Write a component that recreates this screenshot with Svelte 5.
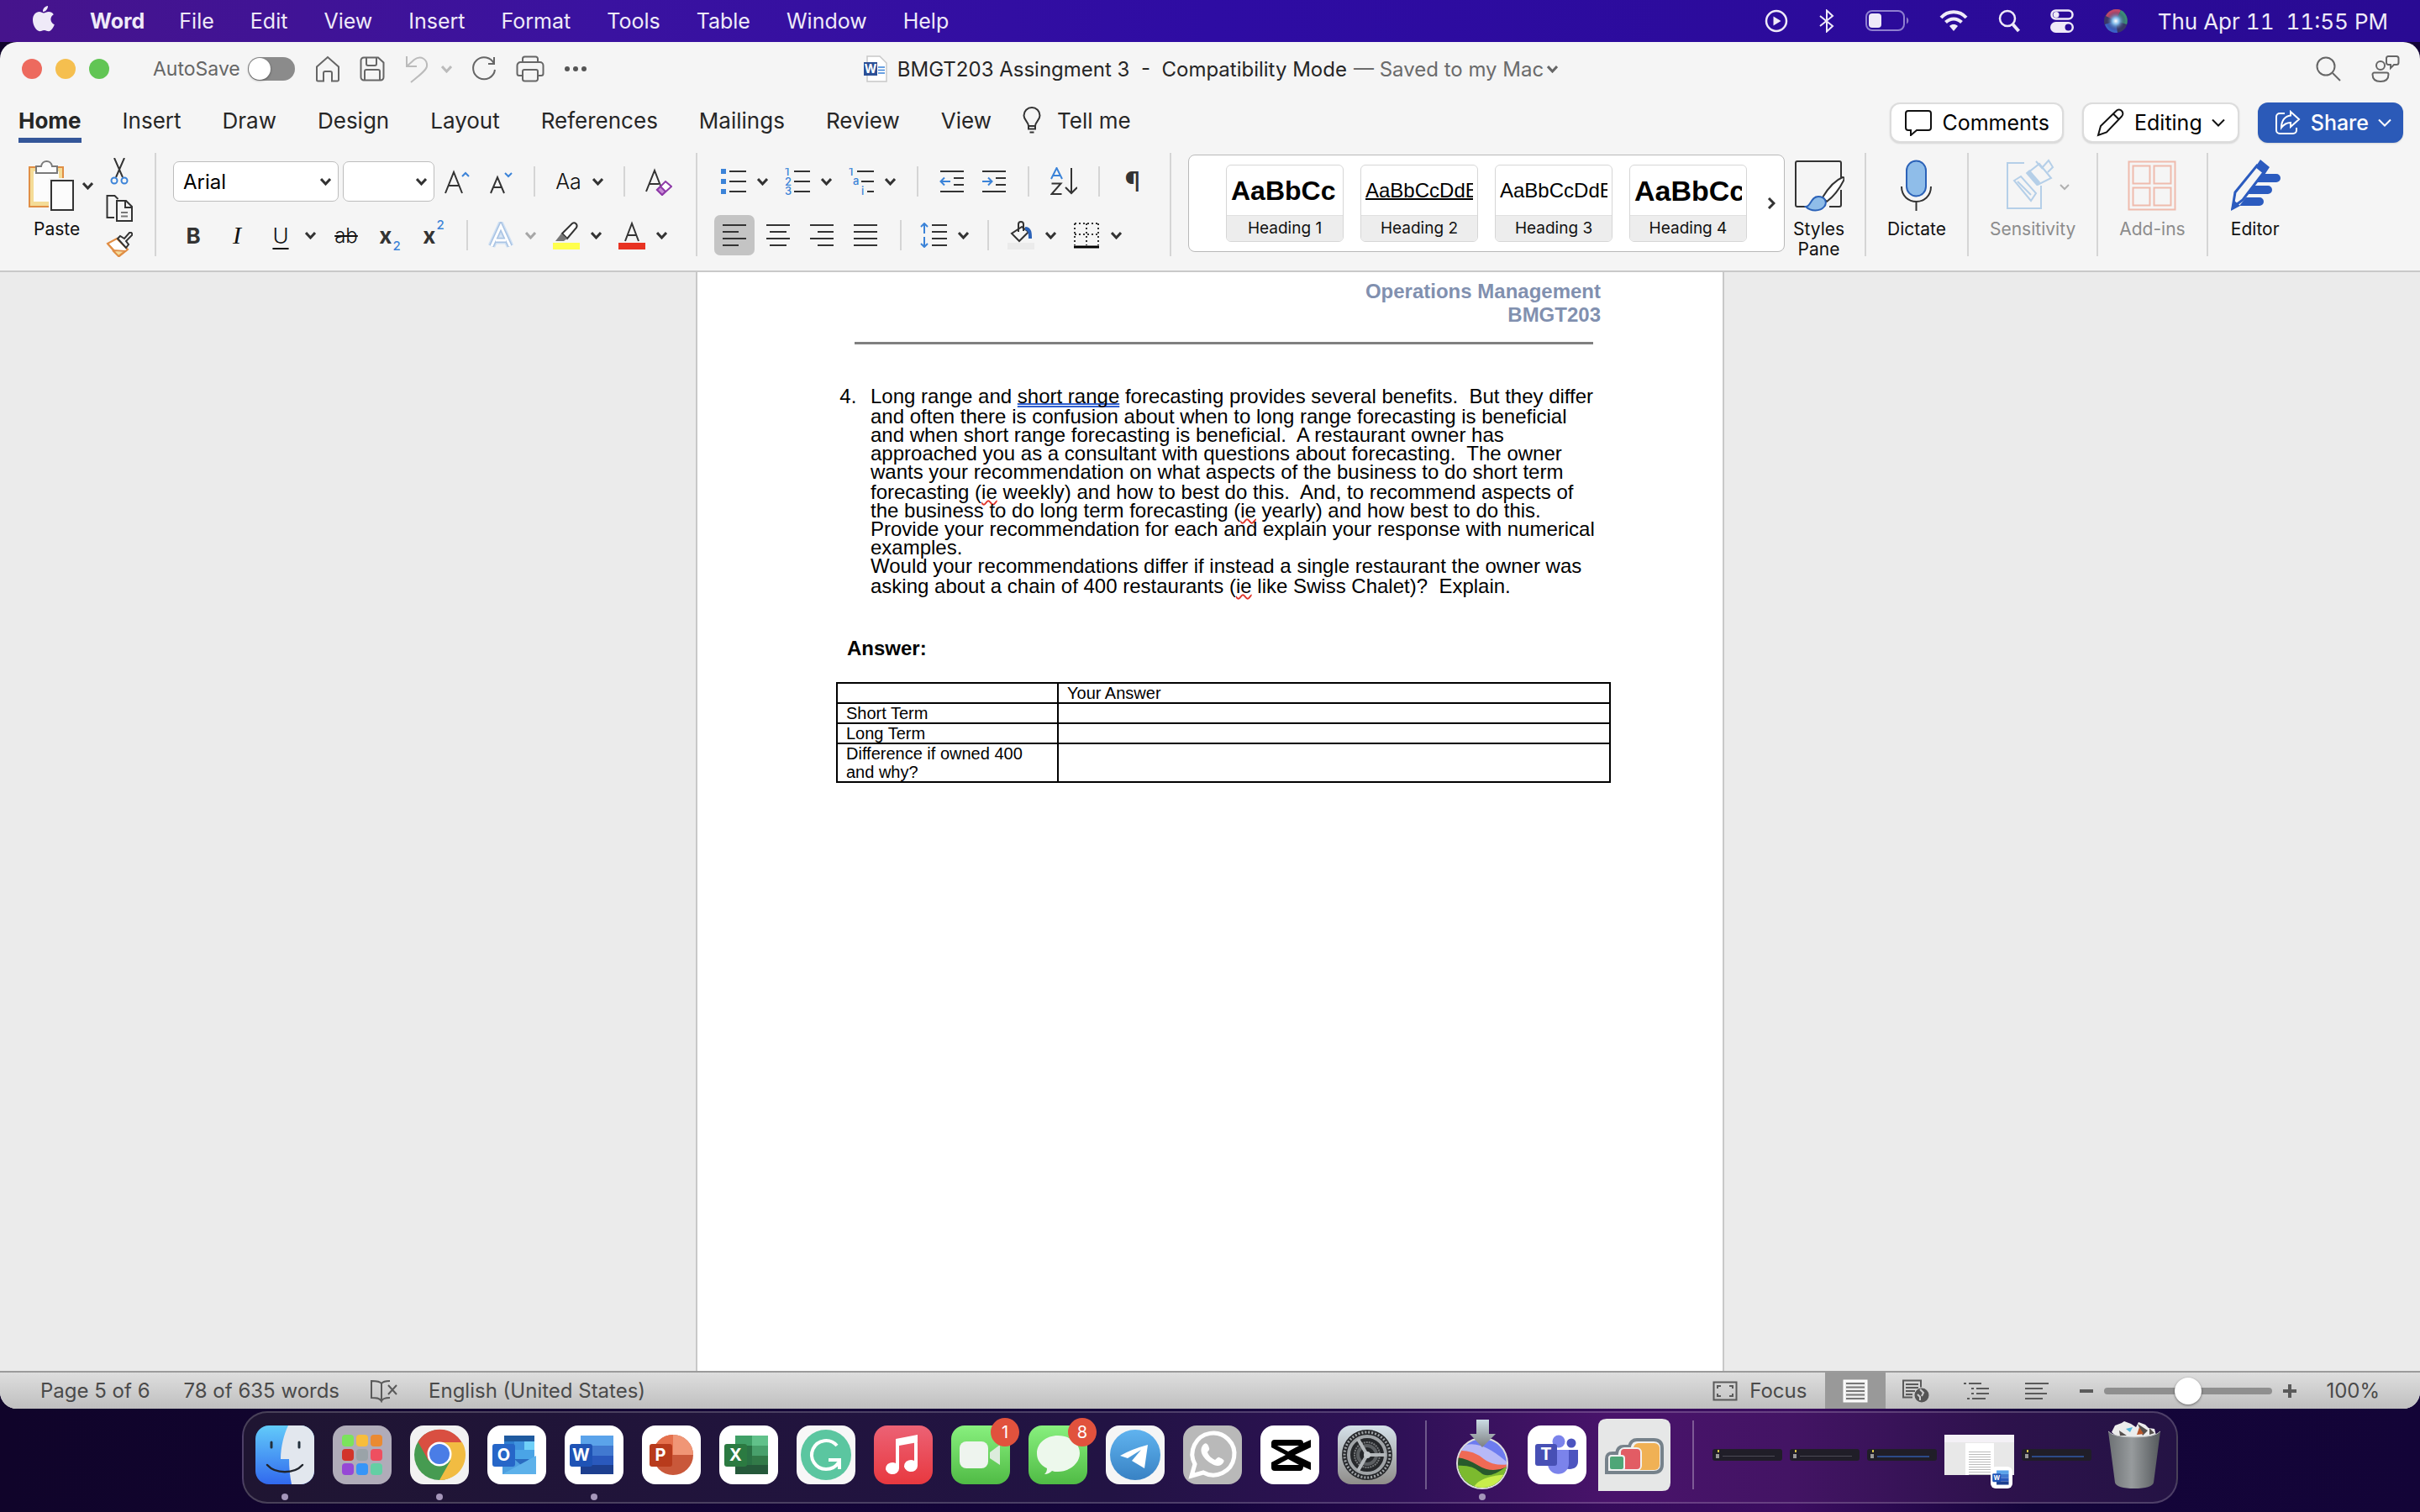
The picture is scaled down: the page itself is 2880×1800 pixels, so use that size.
<script>
    const menus = ["File", "Edit", "View", "Insert", "Format", "Tools", "Table", "Window", "Help"];
    const tabs = ["Insert", "Draw", "Design", "Layout", "References", "Mailings", "Review", "View"];

    const headings = [
        { label: "Heading 1", sample: "AaBbCc", type: "h1" },
        { label: "Heading 2", sample: "AaBbCcDdEe", type: "h2" },
        { label: "Heading 3", sample: "AaBbCcDdEe", type: "h3" },
        { label: "Heading 4", sample: "AaBbCc", type: "h4" },
    ];

    const alignments = [
        { name: "Align left", d: "M1 2h28M1 10h19M1 18h28M1 26h19" },
        { name: "Center", d: "M1 2h28M5 10h20M1 18h28M5 26h20" },
        { name: "Align right", d: "M1 2h28M10 10h19M1 18h28M10 26h19" },
        { name: "Justify", d: "M1 2h28M1 10h28M1 18h28M1 26h28" },
    ];
    let alignment = $state("Align left");
    let zoom = $state(50);

    const launchpad = [
        "#7be35c", "#f7bd3c", "#ea8a32",
        "#d2342a", "#9aa3a8", "#ee4f60",
        "#9647d6", "#3795f7", "#64cfa4",
    ];
</script>

{#snippet chevron()}
    <svg class="chev" width="13" height="10" viewBox="0 0 13 10"><path d="M1 2l5.5 6L12 2" /></svg>
{/snippet}

{#snippet wordLogo(size)}
    <svg width={size} height={size} viewBox="0 0 70 70">
        <rect width="70" height="70" rx="16" fill="#fff" />
        <path d="M19 12h39v12H19z" fill="#5ba3ea" />
        <path d="M19 24h39v12H19z" fill="#4179d0" />
        <path d="M19 36h39v11H19z" fill="#2a59bd" />
        <path d="M19 47h39v11H19z" fill="#1d3f8f" />
        <rect x="6" y="22" width="27" height="27" rx="3" fill="#1f53b5" />
        <text x="19.500" y="42" class="logo-letter">W</text>
    </svg>
{/snippet}

<div class="screen">
    <nav class="menubar">
        <svg class="apple" width="28" height="34" viewBox="0 0 28 34">
            <path
                d="M19 1c.3 3.600-3 7.200-6 7 -.4-3.400 2.600-6.600 6-7zM14 9.600c1.600 0 3.300-1.600 6-1.600 2.300 0 4.500 1.200 5.800 3.200-5 3-4.200 9.800 1 12-1.200 3.400-3.900 8-6.800 8-2.200 0-2.900-1.300-5.400-1.300s-3.300 1.300-5.400 1.300C5.600 31.200 1 24.500 1 17.800 1 11.600 4.800 8.100 8.700 8.100c2.400 0 3.800 1.500 5.300 1.500z"
            />
        </svg>
        <button class="app-name">Word</button>
        {#each menus as menu}
            <button>{menu}</button>
        {/each}
        <div class="tray">
            <svg width="28" height="28" viewBox="0 0 28 28">
                <circle cx="14" cy="14" r="12" class="stroke" />
                <path d="M10.500 8.500l9 5.500-9 5.500z" />
            </svg>
            <svg width="20" height="28" viewBox="0 0 20 28">
                <path d="M2 8l15 12-7 6.500v-25L17 8 2 20" class="stroke thin" />
            </svg>
            <svg width="52" height="26" viewBox="0 0 52 26">
                <rect x="1" y="1" width="45" height="23" rx="7" class="stroke dim" />
                <rect x="4" y="4" width="15" height="17" rx="4" />
                <path d="M49 8.500c3 1.500 3 6.500 0 8z" opacity=".5" />
            </svg>
            <svg width="34" height="26" viewBox="0 0 34 26">
                <path d="M2 9c8-9 22-9 30 0M7.500 14.500c5.500-5.500 13.500-5.500 19 0" class="stroke wide" />
                <path d="M17 25l-5-6c3-2.600 7-2.600 10 0z" />
            </svg>
            <svg width="26" height="28" viewBox="0 0 26 28">
                <circle cx="11" cy="11" r="9" class="stroke" />
                <path d="M17.500 18l7 8" class="stroke wide" />
            </svg>
            <svg width="28" height="28" viewBox="0 0 28 28">
                <rect x="1.500" y="1.500" width="25" height="10" rx="5" class="stroke" />
                <circle cx="7" cy="6.500" r="3.500" />
                <path d="M6.500 15h15a6.500 6.500 0 010 13h-15a6.500 6.500 0 010-13zm15 2.500a4 4 0 100 8 4 4 0 000-8z" fill-rule="evenodd" />
            </svg>
            <svg width="28" height="28" viewBox="0 0 28 28">
                <defs>
                    <radialGradient id="siri">
                        <stop offset="0" stop-color="#fff" />
                        <stop offset=".35" stop-color="#7fb8e8" />
                        <stop offset="1" stop-color="#2b2450" stop-opacity="0" />
                    </radialGradient>
                </defs>
                <circle cx="14" cy="14" r="14" fill="#3a3768" />
                <path d="M2 8a14 14 0 0118-7L14 14z" fill="#c0486a" />
                <path d="M20 1a14 14 0 017 17L14 14z" fill="#3c8a78" />
                <path d="M1 18a14 14 0 0015 10l-2-14z" fill="#3b62c9" />
                <circle cx="14" cy="14" r="12" fill="url(#siri)" />
            </svg>
            <time>Thu Apr 11  11:55 PM</time>
        </div>
    </nav>

    <main class="window">
        <header class="titlebar">
            <div class="quick">
                <div class="lights">
                    <button class="close" aria-label="Close"></button>
                    <button class="minimize" aria-label="Minimize"></button>
                    <button class="full" aria-label="Full screen"></button>
                </div>
                <label class="autosave">AutoSave <input type="checkbox" role="switch" /></label>
                <div class="quick-icons">
                    <button aria-label="Home">
                        <svg width="30" height="32" viewBox="0 0 30 32"><path d="M2 13.500L15 2l13 11.500V29a1.500 1.500 0 01-1.500 1.500H20V21a2 2 0 00-2-2h-6a2 2 0 00-2 2v9.500H3.500A1.500 1.500 0 012 29z" /></svg>
                    </button>
                    <button aria-label="Save">
                        <svg width="30" height="30" viewBox="0 0 30 30"><path d="M5 1.500h17l6.500 6V25a3.500 3.500 0 01-3.500 3.500H5A3.500 3.500 0 011.500 25V5A3.500 3.500 0 015 1.500zM8 2v7a2 2 0 002 2h8a2 2 0 002-2V2M6 28V18a2 2 0 012-2h14a2 2 0 012 2v10" /></svg>
                    </button>
                    <button class="faded" aria-label="Undo">
                        <svg width="30" height="34" viewBox="0 0 30 34"><path d="M3 2v12h12M3 14l9-8c8-6 16 0 15 8-1 5-8 10-19 19" /></svg>
                        {@render chevron()}
                    </button>
                    <button aria-label="Repeat">
                        <svg width="30" height="32" viewBox="0 0 30 32"><path d="M20 10h7V2M27 10a13 13 0 101 7" /></svg>
                    </button>
                    <button aria-label="Print">
                        <svg width="34" height="32" viewBox="0 0 34 32"><path d="M8 8V4a2.500 2.500 0 012.500-2.500h13A2.500 2.500 0 0126 4v4M8 24H4a2.500 2.500 0 01-2.500-2.500V12A4 4 0 015.500 8h23a4 4 0 014 4v9.500A2.500 2.500 0 0130 24h-4M10 17h14a2 2 0 012 2v9a2.500 2.500 0 01-2.500 2.500h-13A2.500 2.500 0 018 28v-9a2 2 0 012-2z" /></svg>
                    </button>
                    <button aria-label="More">
                        <svg class="dots" width="28" height="8" viewBox="0 0 28 8"><circle cx="4" cy="4" r="3" /><circle cx="14" cy="4" r="3" /><circle cx="24" cy="4" r="3" /></svg>
                    </button>
                </div>
            </div>

            <h1>
                <svg width="28" height="32" viewBox="0 0 28 32">
                    <path d="M4 1h15l8 8v22H4z" fill="#fff" stroke="#c8c8c8" stroke-width="1.500" />
                    <path d="M17 14h8M17 17.500h8M17 21h8" stroke="#3b83d8" stroke-width="1.500" />
                    <rect x="0" y="8" width="16" height="16" class="doc-badge" />
                    <text x="8" y="21" class="mini-letter">W</text>
                </svg>
                <span>BMGT203 Assingment 3  -  Compatibility Mode</span>
                <button>— Saved to my Mac {@render chevron()}</button>
            </h1>

            <div class="title-right">
                <button aria-label="Search">
                    <svg width="30" height="30" viewBox="0 0 30 30"><circle cx="12" cy="12" r="10.500" /><path d="M20 20l9 9" /></svg>
                </button>
                <button aria-label="Account">
                    <svg width="34" height="34" viewBox="0 0 34 34"><circle cx="11" cy="13" r="5" /><path d="M1.500 23.500A2 2 0 013.500 21.500h15a2 2 0 012 2C20.500 29 17 32 11 32s-9.500-3-9.500-8.500zM20 2h10a2.500 2.500 0 012.500 2.500v5A2.500 2.500 0 0130 12h-3l-4 4v-4h-3a2.500 2.500 0 01-2-2.500v-5A2.500 2.500 0 0120 2z" /></svg>
                </button>
            </div>
        </header>

        <div class="tabs">
            <button class="active">Home</button>
            {#each tabs as tab}
                <button>{tab}</button>
            {/each}
            <button class="tell-me">
                <svg width="22" height="32" viewBox="0 0 22 32"><path d="M7 23c0-5-5.500-7-5.500-12.500a9.500 9.500 0 0119 0C20.500 16 15 18 15 23zM7 23v3.500h8V23M8.500 30.500h5" /></svg>
                Tell me
            </button>
            <div class="tab-actions">
                <button class="pill">
                    <svg width="34" height="32" viewBox="0 0 34 32"><path d="M5 2h24a3 3 0 013 3v17a3 3 0 01-3 3H15l-7 6v-6H5a3 3 0 01-3-3V5a3 3 0 013-3z" /></svg>
                    Comments
                </button>
                <button class="pill">
                    <svg width="34" height="34" viewBox="0 0 34 34"><path d="M2 32l3-11L23.500 3a4.500 4.500 0 016.500 0 4.500 4.500 0 010 6.500L12 28.500zM20 6.500l7 7" /></svg>
                    Editing
                    <svg width="16" height="12" viewBox="0 0 16 12"><path d="M1 2.500l7 7 7-7" /></svg>
                </button>
                <button class="pill share">
                    <svg width="32" height="30" viewBox="0 0 32 30"><path d="M12 4H6a4 4 0 00-4 4v16a4 4 0 004 4h16a4 4 0 004-4v-3M19 2l10 9-10 9v-5c-5 0-8 2-11 6 0-8 4-14 11-14.500z" /></svg>
                    Share
                    <svg width="16" height="12" viewBox="0 0 16 12"><path d="M1 2.500l7 7 7-7" /></svg>
                </button>
            </div>
        </div>

        <section class="ribbon">
            <div class="clipboard">
                <button class="paste">
                    <span class="art">
                        <svg width="54" height="62" viewBox="0 0 54 62">
                            <path d="M1 9h40v47H1z" fill="#f4dc97" stroke="#e08e45" />
                            <path d="M6 14h30v36H6z" fill="#fcfcfc" stroke="none" />
                            <path d="M9 16V8h6c1-8 12-8 13 0h6v8z" fill="#fcfcfc" stroke="#7a7a7a" />
                            <path d="M24 22h32v40H24z" fill="#f5f5f5" stroke="none" />
                            <path d="M27 25h26v35H27z" fill="#fcfcfc" />
                        </svg>
                        {@render chevron()}
                    </span>
                    Paste
                </button>
                <div class="clip-tools">
                    <button aria-label="Cut">
                        <svg width="32" height="32" viewBox="0 0 32 32"><path d="M10 0l10 23M22 0L12 23" /><g class="blue"><circle cx="10" cy="27" r="3.500" /><circle cx="22" cy="27" r="3.500" /></g></svg>
                    </button>
                    <button aria-label="Copy">
                        <svg width="32" height="32" viewBox="0 0 32 32"><path d="M10 27H1.500V1h9l4 4M13 7h11l7 7v17H13zM23 7v8h8" /><path d="M18 21h8M18 25.500h8" stroke="#777" /></svg>
                    </button>
                    <button aria-label="Format painter">
                        <svg width="32" height="30" viewBox="0 0 32 30"><path d="M2 14l11-6 13 13-10 8z" fill="#fff" stroke="#e08e45" /><path d="M9 23l12 1-6 5z" fill="#f4dc97" stroke="none" /><path d="M2 14l7 8 14 1-8 6-7-7" stroke="#e08e45" /><path d="M14 8l3-3 5 3 6-7c2-1 4 1 3 3l-7 7 3 4-3 4z" fill="#f5f5f5" /></svg>
                    </button>
                </div>
            </div>

            <div class="group font">
                <div class="row wide-gap">
                    <div class="pickers">
                        <label class="picker font-name">
                            <select aria-label="Font"><option>Arial</option></select>
                            {@render chevron()}
                        </label>
                        <label class="picker font-size">
                            <select aria-label="Font size"><option></option></select>
                            {@render chevron()}
                        </label>
                    </div>
                    <button aria-label="Increase font size">
                        <svg width="30" height="32" viewBox="0 0 30 32"><path d="M1 30L11 5l10 25M5 21h12" /><path d="M21 10l4-4 4 4" class="blue" /></svg>
                    </button>
                    <button aria-label="Decrease font size">
                        <svg width="28" height="32" viewBox="0 0 28 32"><path d="M1 30l8-19 8 19M4 23h10" /><path d="M18 6l4 4 4-4" class="blue" /></svg>
                    </button>
                    <span class="sep"></span>
                    <button aria-label="Change case"><span class="case">Aa</span>{@render chevron()}</button>
                    <span class="sep"></span>
                    <button aria-label="Clear formatting">
                        <svg width="32" height="34" viewBox="0 0 32 34"><path d="M1 29L11 4l7 18M4 20h12" /><path d="M24 17l7 6-11 10-6-6z" fill="#fff" stroke="#8e3aa8" /><path d="M18 23l6 6-4 4-6-6z" fill="#c88bd6" stroke="#8e3aa8" /></svg>
                    </button>
                </div>
                <div class="row styles-row">
                    <button class="glyph bold">B</button>
                    <button class="glyph italic">I</button>
                    <button><span class="glyph under">U</span>{@render chevron()}</button>
                    <button class="glyph strike">ab</button>
                    <button class="glyph bold x-letter">x<sub>2</sub></button>
                    <button class="glyph bold x-letter">x<sup>2</sup></button>
                    <span class="sep"></span>
                    <button class="effects" aria-label="Text effects">
                        <svg width="32" height="32" viewBox="0 0 32 32"><path d="M5 29L16 5l11 24M10 22h12" stroke="#cfe0f3" stroke-width="9" /><path d="M5 29L16 5l11 24M10 22h12" stroke="#a9c3e3" stroke-width="6" /><path d="M5 29L16 5l11 24M10 22h12" stroke="#fff" stroke-width="3" /></svg>
                        {@render chevron()}
                    </button>
                    <button aria-label="Highlight">
                        <svg width="32" height="34" viewBox="0 0 32 34"><path d="M11 15L23 3c3-2 7 1 5 5L17 21z" fill="#fff" /><path d="M10 15l7 6-4 3H3z" fill="#777" stroke="none" /><path d="M0 26h32v8H0z" fill="#ffff4d" stroke="none" /></svg>
                        {@render chevron()}
                    </button>
                    <button aria-label="Font color">
                        <svg width="32" height="34" viewBox="0 0 32 34"><path d="M8 24l8-21 8 21M11 17h10" /><path d="M0 26h32v8H0z" fill="#e83323" stroke="none" /></svg>
                        {@render chevron()}
                    </button>
                </div>
            </div>

            <div class="group paragraph">
                <div class="row">
                    <button aria-label="Bullets">
                        <svg width="30" height="30" viewBox="0 0 30 30"><path d="M10 3h20M10 15h20M10 27h20" /><path d="M0 0h6v6H0zM0 12h6v6H0zM0 24h6v6H0z" fill="#3b83d8" stroke="none" /></svg>
                        {@render chevron()}
                    </button>
                    <button aria-label="Numbering">
                        <svg width="30" height="32" viewBox="0 0 30 32"><path d="M11 4h19M11 16h19M11 28h19" /><text x="0" y="9" class="num">1</text><text x="0" y="21" class="num">2</text><text x="0" y="32" class="num">3</text></svg>
                        {@render chevron()}
                    </button>
                    <button aria-label="Multilevel list">
                        <svg width="30" height="32" viewBox="0 0 30 32"><path d="M10 4h20M15 16h15M22 28h8" /><text x="0" y="9" class="num">1</text><text x="5" y="20" class="num">a</text><text x="15" y="32" class="num">i</text></svg>
                        {@render chevron()}
                    </button>
                    <span class="sep"></span>
                    <button aria-label="Decrease indent">
                        <svg width="30" height="30" viewBox="0 0 30 30"><path d="M1 3h28M17 11h12M17 19h12M1 27h28" /><path d="M13 15H2M6 10.500L1.500 15 6 19.500" class="blue" /></svg>
                    </button>
                    <button aria-label="Increase indent">
                        <svg width="30" height="30" viewBox="0 0 30 30"><path d="M1 3h28M17 11h12M17 19h12M1 27h28" /><path d="M1 15h11M8 10.500l4.500 4.500L8 19.500" class="blue" /></svg>
                    </button>
                    <span class="sep"></span>
                    <button aria-label="Sort">
                        <svg width="32" height="34" viewBox="0 0 32 34"><path d="M25 1v30M18 24l7 7 7-7" /><path d="M1 14L7.500 1 14 14M3.500 10h8" class="blue" /><path d="M1.500 19.500h11l-11 12.500h12" /></svg>
                    </button>
                    <span class="sep"></span>
                    <button class="pilcrow">¶</button>
                </div>
                <div class="row align-row">
                    <div class="aligns">
                        {#each alignments as item}
                            <button class:selected={alignment === item.name} aria-label={item.name} onclick={() => (alignment = item.name)}>
                                <svg width="30" height="28" viewBox="0 0 30 28"><path d={item.d} /></svg>
                            </button>
                        {/each}
                    </div>
                    <span class="sep"></span>
                    <button aria-label="Line spacing">
                        <svg width="32" height="30" viewBox="0 0 32 30"><path d="M14 3h18M14 11h18M14 19h18M14 27h18" /><path d="M5 1v12M1 5l4-4 4 4M5 17v12M1 25l4 4 4-4" class="blue" /></svg>
                        {@render chevron()}
                    </button>
                    <span class="sep"></span>
                    <button aria-label="Shading">
                        <svg width="32" height="34" viewBox="0 0 32 34"><path d="M17 7L5 15l9 9 11-11zM13 13V4c0-4 6-4 6 0v8" /><path d="M21 9c6 0 6 6 6 12" stroke="#2b62b8" stroke-width="4" /><path d="M0 26h32v8H0z" fill="#ebebeb" stroke="none" /></svg>
                        {@render chevron()}
                    </button>
                    <button aria-label="Borders">
                        <svg width="32" height="32" viewBox="0 0 32 32"><path d="M2 2h28M2 2v26M30 2v26M16 2v26M2 15h28" stroke-dasharray="2 3" /><path d="M1 30h30" stroke="#000" stroke-width="3" /></svg>
                        {@render chevron()}
                    </button>
                </div>
            </div>

            <div class="gallery-group">
                <div class="gallery">
                    {#each headings as heading}
                        <button class="card">
                            <span class="sample {heading.type}">{heading.sample}</span>
                            <span class="card-label">{heading.label}</span>
                        </button>
                    {/each}
                    <button class="more" aria-label="More styles">
                        <svg width="10" height="14" viewBox="0 0 10 14"><path d="M2 1l6 6-6 6" /></svg>
                    </button>
                </div>
                <button class="large pane">
                    <svg width="60" height="62" viewBox="0 0 60 62">
                        <path d="M14 56H4a2 2 0 01-2-2V4a2 2 0 012-2h50a2 2 0 012 2v18M56 36v18a2 2 0 01-2 2H42" />
                        <path d="M34 45c6-10 14-20 24-24 2 0 2 2 1 4-5 10-12 19-20 25z" fill="#fff" />
                        <path d="M14 56c6 0 6-12 15-12 8 0 11 7 7 12-5 6-16 6-22 0z" class="fill-blue" />
                    </svg>
                    <span>Styles<br />Pane</span>
                </button>
            </div>

            <button class="large">
                <svg width="40" height="62" viewBox="0 0 40 62">
                    <rect x="8" y="1.500" width="23" height="42" rx="11.500" class="fill-blue" />
                    <path d="M2 32c0 24 35 24 35 0M19.500 50v11" />
                </svg>
                <span>Dictate</span>
            </button>
            <button class="large disabled">
                <svg width="88" height="64" viewBox="0 0 88 64">
                    <g stroke="#b5cfe8">
                        <path d="M34 5H14v54h40V32" />
                        <path d="M22 26l8-5 18 20-6 9zM26 27l16 16" />
                        <path d="M38 17l12 14 16-8-14-17zM48 3l8 9M55 11l8-9 5 8-6 6" />
                        <path d="M38 15l13 15" stroke-width="6" />
                    </g>
                    <path d="M77 31l5 5 5-5" stroke="#b0b0b0" />
                </svg>
                <span>Sensitivity</span>
            </button>
            <button class="large disabled">
                <svg width="58" height="60" viewBox="0 0 58 60">
                    <path d="M1.500 1.500h55v57h-55zM6.500 6.500h20v21h-20zM31.500 6.500h20v21h-20zM6.500 32.500h20v21h-20zM31.500 32.500h20v21h-20z" stroke="#efbbad" />
                </svg>
                <span>Add-ins</span>
            </button>
            <button class="large">
                <svg width="62" height="64" viewBox="0 0 62 64">
                    <path d="M34 18h22a5 5 0 010 10H28zM28 32h18a5 5 0 010 10H22zM20 46h16a5 5 0 010 10H12z" fill="#2b5bbf" stroke="none" />
                    <path d="M4 58l3-18L33 8l9 7-26 34z" fill="#f5f5f5" stroke="#2b5bbf" stroke-width="3" />
                    <path d="M31 10l6-9 11 9-6 9zM2 62l3-13 8 7z" fill="#2b5bbf" stroke="none" />
                </svg>
                <span>Editor</span>
            </button>
        </section>

        <section class="workspace">
            <article class="page">
                <header class="page-header">
                    <p>Operations Management</p>
                    <p>BMGT203</p>
                </header>
                <ol start="4">
                    <li>
                        <span class="line gap">Long range and <span class="grammar">short range</span> forecasting provides several benefits.  But they differ</span>
                        <span class="line">and often there is confusion about when to long range forecasting is beneficial</span>
                        <span class="line">and when short range forecasting is beneficial.  A restaurant owner has</span>
                        <span class="line">approached you as a consultant with questions about forecasting.  The owner</span>
                        <span class="line gap">wants your recommendation on what aspects of the business to do short term</span>
                        <span class="line">forecasting (<span class="typo">ie</span> weekly) and how to best do this.  And, to recommend aspects of</span>
                        <span class="line">the business to do long term forecasting (<span class="typo">ie</span> yearly) and how best to do this.</span>
                        <span class="line">Provide your recommendation for each and explain your response with numerical</span>
                        <span class="line">examples.</span>
                        <span class="line gap">Would your recommendations differ if instead a single restaurant the owner was</span>
                        <span class="line">asking about a chain of 400 restaurants (<span class="typo">ie</span> like Swiss Chalet)?  Explain.</span>
                    </li>
                </ol>
                <h2>Answer:</h2>
                <table>
                    <tbody>
                        <tr><td></td><td>Your Answer</td></tr>
                        <tr><td>Short Term</td><td></td></tr>
                        <tr><td>Long Term</td><td></td></tr>
                        <tr><td>Difference if owned 400 and why?</td><td></td></tr>
                    </tbody>
                </table>
            </article>
        </section>

        <footer class="status">
            <span>Page 5 of 6</span>
            <span class="words">78 of 635 words</span>
            <button class="proof" aria-label="Proofing errors">
                <svg width="34" height="28" viewBox="0 0 34 28"><path d="M14 5v21M14 5c-2-3-7-3-12-3v20c5 0 10 0 12 4 1-3 5-4 10-4M14 5c2-3 6-3 10-3M22 7l10 11M32 7L22 18" /></svg>
            </button>
            <span>English (United States)</span>
            <div class="status-right">
                <button class="focus">
                    <svg width="30" height="24" viewBox="0 0 30 24"><path d="M1.500 1.500h27v21h-27zM6 9V6h4M20 6h4v3M6 15v3h4M20 18h4v-3" /></svg>
                    Focus
                </button>
                <button class="view current" aria-label="Print layout">
                    <svg width="30" height="28" viewBox="0 0 30 28"><path d="M1.500 1.500h27v25h-27z" fill="#eee" stroke="#fff" /><path d="M4 5h22M4 9.500h22M4 14h22M4 18.500h22M4 23h22" stroke="#777" /></svg>
                </button>
                <button class="view" aria-label="Web layout">
                    <svg width="34" height="28" viewBox="0 0 34 28"><path d="M13 21.500H2v-20h21v8M5 6h15M5 10h15M5 14h11M5 18h8" /><circle cx="24" cy="19" r="8.500" fill="#555" stroke="none" /><path d="M22 12l4 4-2 4M19 18l3 3v4" stroke="#ccc" /></svg>
                </button>
                <button class="view" aria-label="Outline">
                    <svg width="30" height="22" viewBox="0 0 30 22"><path d="M0 2h3M6 2h15M9 8h3M15 8h15M9 14h3M15 14h15M4 20h3M10 20h16" /></svg>
                </button>
                <button class="view" aria-label="Draft">
                    <svg width="30" height="22" viewBox="0 0 30 22"><path d="M1 2h28M1 8h21M1 14h26M1 20h21" /></svg>
                </button>
                <div class="zoom">
                    <button aria-label="Zoom out"><svg width="18" height="18" viewBox="0 0 18 18"><path d="M1 9h16" stroke-width="4" /></svg></button>
                    <input type="range" min="0" max="100" bind:value={zoom} aria-label="Zoom" />
                    <button aria-label="Zoom in"><svg width="18" height="18" viewBox="0 0 18 18"><path d="M1 9h16M9 1v16" stroke-width="4" /></svg></button>
                </div>
                <span class="percent">100%</span>
            </div>
        </footer>
    </main>

    <div class="dock-area">
        <nav class="dock">
            <button class="app running" aria-label="Finder">
                <svg width="70" height="70" viewBox="0 0 70 70">
                    <defs>
                        <linearGradient id="finder" x2="0" y2="1"><stop stop-color="#62cbfa" /><stop offset="1" stop-color="#3169ee" /></linearGradient>
                        <clipPath id="tile"><rect width="70" height="70" rx="16" /></clipPath>
                    </defs>
                    <g clip-path="url(#tile)">
                        <rect width="70" height="70" fill="url(#finder)" />
                        <path d="M39 0c-5 10-9 26-9 40h10c0 10 1 20 3 30h27V0z" fill="#e2e7ee" />
                        <path d="M19 20v6M52 20v6" stroke="#22303c" stroke-width="3" stroke-linecap="round" />
                        <path d="M14 47c10 11 32 11 42 0" stroke="#20242c" stroke-width="2.500" fill="none" stroke-linecap="round" />
                    </g>
                </svg>
            </button>
            <button class="app" aria-label="Launchpad">
                <svg width="70" height="70" viewBox="0 0 70 70">
                    <rect width="70" height="70" rx="16" fill="#b0acb9" />
                    {#each launchpad as color, i}
                        <rect x={11 + (i % 3) * 17} y={11 + Math.floor(i / 3) * 17} width="14" height="14" rx="4" fill={color} />
                    {/each}
                </svg>
            </button>
            <button class="app running" aria-label="Chrome">
                <svg width="70" height="70" viewBox="0 0 70 70">
                    <rect width="70" height="70" rx="16" fill="#f2f2f2" />
                    <circle cx="35" cy="35" r="30" fill="#469b51" />
                    <path d="M35 20h27A30 30 0 0135 65l13-23z" fill="#f2bc42" />
                    <path d="M35 20h26.500A30 30 0 009.500 19.500L22 42z" fill="#d94f41" />
                    <circle cx="35" cy="34" r="14.500" fill="#fff" />
                    <circle cx="35" cy="34" r="12" fill="#4a7de6" />
                </svg>
            </button>
            <button class="app" aria-label="Outlook">
                <svg width="70" height="70" viewBox="0 0 70 70">
                    <rect width="70" height="70" rx="16" fill="#fff" />
                    <path d="M20 12h36v7H20z" fill="#1f5a9f" />
                    <path d="M20 19h12v30H20z" fill="#2f7fd0" />
                    <path d="M32 19h12v10H32z" fill="#3f94df" />
                    <path d="M44 19h12v10H44z" fill="#6fd0f8" />
                    <path d="M32 29h24v11H32z" fill="#4aa4e6" />
                    <path d="M18 40h40v18H18z" fill="#4d9fe0" />
                    <path d="M32 40h18l-9 8z" fill="#2a6bc0" />
                    <path d="M18 58l40-22v22z" fill="#5db1ea" />
                    <rect x="6" y="22" width="27" height="27" rx="3" fill="#2666c8" />
                    <text x="19.500" y="42" class="logo-letter">O</text>
                </svg>
            </button>
            <button class="app running" aria-label="Word">{@render wordLogo(70)}</button>
            <button class="app" aria-label="PowerPoint">
                <svg width="70" height="70" viewBox="0 0 70 70">
                    <rect width="70" height="70" rx="16" fill="#fff" />
                    <circle cx="37" cy="35" r="24" fill="#c9583a" />
                    <path d="M37 11a24 24 0 0124 24H37z" fill="#f09676" />
                    <path d="M37 11a24 24 0 00-24 24h24z" fill="#e5714d" />
                    <rect x="9" y="22" width="27" height="27" rx="3" fill="#b83b1c" />
                    <text x="22" y="42" class="logo-letter">P</text>
                </svg>
            </button>
            <button class="app" aria-label="Excel">
                <svg width="70" height="70" viewBox="0 0 70 70">
                    <rect width="70" height="70" rx="16" fill="#fff" />
                    <path d="M19 12h20v12H19z" fill="#3f9f66" />
                    <path d="M39 12h19v12H39z" fill="#61c18a" />
                    <path d="M19 24h20v23H19z" fill="#2a7244" />
                    <path d="M39 24h19v12H39z" fill="#48a06b" />
                    <path d="M39 36h19v11H39z" fill="#327a48" />
                    <path d="M19 47h39v11H19z" fill="#25593a" />
                    <rect x="6" y="22" width="27" height="27" rx="3" fill="#2b7a41" />
                    <text x="19.500" y="42" class="logo-letter">X</text>
                </svg>
            </button>
            <button class="app" aria-label="Grammarly">
                <svg width="70" height="70" viewBox="0 0 70 70">
                    <rect width="70" height="70" rx="16" fill="#f7f7f7" />
                    <circle cx="35" cy="35" r="30" fill="#5bc6a0" />
                    <path d="M48 24a17 17 0 10-13 28c7 0 12-3 15-8M38 41h13v11" fill="none" stroke="#fff" stroke-width="4" />
                </svg>
            </button>
            <button class="app" aria-label="Music">
                <svg width="70" height="70" viewBox="0 0 70 70">
                    <defs><linearGradient id="music" x2="0" y2="1"><stop stop-color="#ec6275" /><stop offset="1" stop-color="#e8383f" /></linearGradient></defs>
                    <rect width="70" height="70" rx="16" fill="url(#music)" />
                    <path d="M26 16l26-5v9l-22 4v27a8 7 0 11-4-6zM48 14h4v34a8 7 0 11-4-6z" fill="#fff" />
                </svg>
            </button>
            <button class="app" aria-label="FaceTime, 1 notification">
                <svg width="70" height="70" viewBox="0 0 70 70">
                    <defs><linearGradient id="green" x2="0" y2="1"><stop stop-color="#88f07e" /><stop offset="1" stop-color="#50bb45" /></linearGradient></defs>
                    <rect width="70" height="70" rx="16" fill="url(#green)" />
                    <rect x="10" y="19" width="34" height="32" rx="8" fill="#eef4ee" />
                    <path d="M46 32l12-9v24l-12-8z" fill="#dcecdc" />
                </svg>
                <span class="badge">1</span>
            </button>
            <button class="app" aria-label="Messages, 8 notifications">
                <svg width="70" height="70" viewBox="0 0 70 70">
                    <rect width="70" height="70" rx="16" fill="url(#green)" />
                    <path d="M35 12c14 0 26 9 26 21S49 55 35 55c-3 0-5 0-7-1-2 2-5 4-9 4 2-2 3-4 3-7-8-4-12-10-12-18 0-12 11-21 25-21z" fill="#edf8ec" />
                </svg>
                <span class="badge">8</span>
            </button>
            <button class="app" aria-label="Telegram">
                <svg width="70" height="70" viewBox="0 0 70 70">
                    <defs><linearGradient id="telegram" x2="0" y2="1"><stop stop-color="#60b3ef" /><stop offset="1" stop-color="#3882c4" /></linearGradient></defs>
                    <rect width="70" height="70" rx="16" fill="#f5f5f5" />
                    <circle cx="35" cy="35" r="30" fill="url(#telegram)" />
                    <path d="M17 36q14-8 33-13l-4 28-15-9 11-13-16 10z" fill="#fff" />
                </svg>
            </button>
            <button class="app" aria-label="WhatsApp">
                <svg width="70" height="70" viewBox="0 0 70 70">
                    <rect width="70" height="70" rx="16" fill="#b9b9b9" />
                    <path d="M10 60l4-14a25 25 0 1110 10z" fill="none" stroke="#fff" stroke-width="5" />
                    <path d="M25 22c3-2 5 1 6 5 1 2-2 4-2 5 2 5 5 7 9 9 2-1 3-4 5-3 4 2 7 3 5 6-3 5-9 5-15 1-9-5-16-16-8-23z" fill="#fff" />
                </svg>
            </button>
            <button class="app" aria-label="CapCut">
                <svg width="70" height="70" viewBox="0 0 70 70">
                    <rect width="70" height="70" rx="16" fill="#fff" />
                    <path d="M17 17h30q4 0 4 4l9-4v9l-19 9 19 9v9l-9-4q0 5-4 5H17q-4 0-4-4v-6l17-9-17-9v-5q0-4 4-4zM20 24h26l-13 7zM20 47h26l-13-7z" fill-rule="evenodd" />
                </svg>
            </button>
            <button class="app" aria-label="System Settings">
                <svg width="70" height="70" viewBox="0 0 70 70">
                    <defs><linearGradient id="settings" x2="0" y2="1"><stop stop-color="#d5e1e9" /><stop offset="1" stop-color="#8f8d8a" /></linearGradient></defs>
                    <rect width="70" height="70" rx="16" fill="url(#settings)" />
                    <circle cx="35" cy="35" r="30" fill="#26282b" />
                    <g fill="none">
                        <circle cx="35" cy="35" r="27" stroke="#a0a4a7" stroke-width="3" stroke-dasharray="2 2" />
                        <circle cx="35" cy="35" r="22" stroke="#a0a4a7" stroke-width="4" />
                        <circle cx="35" cy="35" r="15" stroke="#77797b" stroke-width="2" stroke-dasharray="2 1" />
                        <circle cx="35" cy="35" r="11" stroke="#5c5f62" stroke-width="4" />
                        <path d="M35 35h22M35 35L24 16M35 35L24 54" stroke="#b3b7ba" stroke-width="4" />
                    </g>
                    <circle cx="35" cy="35" r="4" fill="#c5c9cc" />
                </svg>
            </button>

            <span class="divider"></span>

            <button class="app installer running" aria-label="macOS installer">
                <svg width="64" height="86" viewBox="0 0 64 86">
                    <defs>
                        <clipPath id="globe"><circle cx="32" cy="53" r="29" /></clipPath>
                        <linearGradient id="arrow" x2="0" y2="1"><stop stop-color="#cbdbe4" /><stop offset="1" stop-color="#7d8081" /></linearGradient>
                    </defs>
                    <circle cx="32" cy="53" r="31" fill="#dedede" />
                    <g clip-path="url(#globe)">
                        <rect y="22" width="64" height="64" fill="#6d7cf0" />
                        <path d="M0 40q10-14 30-8 14 4 34 22v8L0 60z" fill="#b7b9f7" />
                        <path d="M0 38q20-2 34 10 12 9 30 6v12L0 54z" fill="#ef6a55" />
                        <path d="M0 46q12 0 28 10t36 0v30H0z" fill="#285a2c" />
                        <path d="M0 56q20-2 30 8t34-10v32H0z" fill="#7cba2e" />
                        <path d="M20 86q4-18 44-20v20z" fill="#c8ee4c" />
                    </g>
                    <path d="M25 1h15v17h8L32 34 17 18h8z" fill="url(#arrow)" />
                </svg>
            </button>
            <button class="app" aria-label="Teams">
                <svg width="70" height="70" viewBox="0 0 70 70">
                    <rect width="70" height="70" rx="16" fill="#fff" />
                    <circle cx="52" cy="21" r="5.500" fill="#4c54bf" />
                    <path d="M40 29h20v14c0 10-14 12-20 4z" fill="#4c54bf" />
                    <circle cx="37" cy="19" r="7.500" fill="#7b83eb" />
                    <path d="M24 29h25v16c0 17-25 17-25 0z" fill="#7b83eb" />
                    <rect x="9" y="22" width="26" height="26" rx="3" fill="#4750b5" />
                    <text x="22" y="41" class="logo-letter">T</text>
                </svg>
            </button>
            <button class="app windows-app" aria-label="Window manager">
                <svg width="86" height="86" viewBox="0 0 86 86">
                    <path d="M0 10Q0 0 10 0h66q10 0 10 10v66q0 10-10 10H0z" fill="#e6e7e7" />
                    <path d="M10 64V48q0-7 7-7h5q1-8 8-8h7q2-8 9-8h20q10 0 10 10v19q0 10-10 10z" fill="#f0f1f1" stroke="#76828b" stroke-width="4" />
                    <rect x="42" y="29" width="31" height="32" rx="6" fill="#f0b155" />
                    <rect x="26" y="35" width="25" height="26" rx="5" fill="#e25c64" stroke="#f0f1f1" stroke-width="2" />
                    <rect x="13" y="44" width="18" height="17" rx="3" fill="#4fa677" stroke="#f0f1f1" stroke-width="2" />
                </svg>
            </button>

            <span class="divider"></span>

            <div class="minimized">
                {#each [1, 2, 3] as n}
                    <button class="strip" class:busy={n === 3} aria-label="Minimized window {n}"></button>
                {/each}
                <button class="mini-word" aria-label="Minimized document">
                    <span class="mini-page"></span>
                    <span class="mini-badge">{@render wordLogo(26)}</span>
                </button>
                <button class="strip busy" aria-label="Minimized window 5"></button>
            </div>
            <button class="app trash" aria-label="Trash">
                <svg width="64" height="82" viewBox="0 0 64 82">
                    <defs><linearGradient id="bin" x2="1" y2="0"><stop stop-color="#6d7174" /><stop offset=".45" stop-color="#979b9d" /><stop offset="1" stop-color="#54585b" /></linearGradient></defs>
                    <path d="M5 14l4-8 8-3 3-2 8 3 6 4 3-6 8 3 4 4 7 1 2 8-12 4H14z" fill="#ececec" />
                    <path d="M14 12l9 6h-8zM36 4l12 8-6 6zM50 9l6 6-6 2z" fill="#55504e" />
                    <path d="M22 10l8-2-3 6z" fill="#4fb3d9" />
                    <path d="M38 8l5 8-8 1z" fill="#b8562b" />
                    <path d="M1 13q6 7 31 7t31-7l-8 61q-2 7-23 7T9 74z" fill="url(#bin)" />
                    <path d="M1 13q6 7 31 7t31-7" fill="none" stroke="#b5b8ba" />
                </svg>
            </button>
        </nav>
    </div>
</div>

<style>
    :global(body) {
        background: #10042b;
    }
    .screen {
        height: 100vh;
        display: flex;
        flex-direction: column;
        overflow: hidden;
        font-family: Inter, "Liberation Sans", sans-serif;
        font-size: 24px;
        color: #262626;
        background: linear-gradient(90deg, #10042a 0%, #15053c 50%, #350b5a 66%, #3c0d60 74%, #14053a 84%, #130437 100%);
    }
    button {
        font: inherit;
        color: inherit;
        background: none;
        border: 0;
        padding: 0;
        display: flex;
        align-items: center;
    }
    svg {
        display: block;
        flex-shrink: 0;
    }

    .menubar {
        height: 50px;
        flex-shrink: 0;
        display: flex;
        align-items: center;
        gap: 43px;
        padding: 0 38px;
        color: #efeaf8;
        font-size: 25px;
        background: linear-gradient(90deg, #46148c 0%, #3a12a0 25%, #2e0ca3 50%, #290a93 100%);
    }
    .menubar svg {
        fill: #efeaf8;
    }
    .app-name {
        font-weight: 700;
        margin: 0 -2px;
    }
    .apple {
        margin-bottom: 4px;
    }
    .tray {
        margin-left: auto;
        display: flex;
        align-items: center;
        gap: 36px;
    }
    .tray .stroke {
        fill: none;
        stroke: #efeaf8;
        stroke-width: 2.5;
    }
    .tray .thin {
        stroke-width: 2;
    }
    .tray .wide {
        stroke-width: 4;
    }
    .tray .dim {
        stroke: #8f7fd0;
        stroke-width: 2;
    }
    .tray time {
        white-space: pre;
        font-size: 26px;
        font-variant-numeric: tabular-nums;
    }

    .window {
        flex: 1;
        min-height: 0;
        display: flex;
        flex-direction: column;
        background: #f5f5f5;
        border-radius: 20px;
        overflow: hidden;
    }
    .window svg {
        fill: none;
        stroke: #333;
        stroke-width: 2;
    }
    .window .chev {
        stroke-width: 3;
    }
    .window .blue {
        stroke: #3b83d8;
    }
    .fill-blue {
        fill: #8fbde9;
        stroke: #2b62b8;
    }

    .titlebar {
        height: 64px;
        flex-shrink: 0;
        display: grid;
        grid-template-columns: 1fr auto 1fr;
        align-items: center;
        padding: 0 24px 0 26px;
    }
    .titlebar svg {
        stroke: #666;
    }
    .quick,
    .lights,
    .quick-icons,
    .title-right {
        display: flex;
        align-items: center;
    }
    .lights {
        gap: 16px;
    }
    .lights button {
        width: 24px;
        height: 24px;
        border-radius: 50%;
    }
    .close {
        background: #ed6a5e;
    }
    .minimize {
        background: #f5bf4f;
    }
    .full {
        background: #61c554;
    }
    .autosave {
        display: flex;
        align-items: center;
        gap: 9px;
        margin-left: 52px;
        color: #666;
        font-size: 23px;
    }
    .autosave input {
        appearance: none;
        width: 56px;
        height: 28px;
        margin: 0;
        border-radius: 14px;
        background: #8b8b8b;
    }
    .autosave input::before {
        content: "";
        display: block;
        width: 26px;
        height: 26px;
        margin: 1px;
        border-radius: 50%;
        background: #fff;
        box-shadow: 0 1px 3px #0006;
    }
    .quick-icons {
        margin-left: 24px;
        gap: 23px;
    }
    .quick-icons button {
        gap: 14px;
    }
    .faded {
        opacity: 0.4;
    }
    .window .dots {
        fill: #555;
        stroke: none;
    }
    h1 {
        display: flex;
        align-items: center;
        gap: 8px;
        margin: 0;
        font-size: 24px;
        font-weight: 400;
    }
    h1 span {
        white-space: pre;
        margin-left: 4px;
    }
    h1 button {
        color: #6b6b6b;
        gap: 4px;
    }
    .doc-badge {
        fill: #2b4f96;
        stroke: none;
    }
    .mini-letter {
        font-size: 14px;
        font-weight: 700;
        fill: #fff;
        stroke: none;
        text-anchor: middle;
    }
    .title-right {
        justify-content: flex-end;
        gap: 36px;
    }

    .tabs {
        height: 62px;
        flex-shrink: 0;
        display: flex;
        align-items: center;
        gap: 49px;
        padding: 0 20px 0 22px;
        font-size: 26px;
    }
    .tabs > button {
        height: 50px;
        padding-top: 2px;
        border-bottom: 6px solid transparent;
    }
    .tabs > .active {
        font-weight: 700;
        border-image: linear-gradient(#345699, #345699) 1;
    }
    .tabs > .tell-me {
        gap: 19px;
        margin-left: -12px;
    }
    .tab-actions {
        margin-left: auto;
        padding-top: 2px;
        display: flex;
        gap: 22px;
        font-size: 25px;
    }
    .pill {
        height: 48px;
        padding: 0 15px;
        gap: 11px;
        color: #000;
        background: #fff;
        border: 2px solid #dcdcdc;
        border-radius: 12px;
        box-shadow: 0 1px 2px #0002;
    }
    .pill svg {
        stroke: #111;
    }
    .share {
        padding: 0 12px 0 18px;
        color: #fff;
        font-weight: 500;
        background: #2b5ab8;
        border-color: #2b5ab8;
    }
    .share svg {
        stroke: #fff;
    }

    .ribbon {
        flex-shrink: 0;
        display: flex;
        height: 123px;
        padding: 6px 0 17px;
        border-bottom: 2px solid #c9c9c9;
        font-size: 21px;
        color: #111;
    }
    .clipboard {
        display: flex;
        padding: 6px 26px 0 34px;
        border-right: 2px solid #d5d5d5;
    }
    .paste {
        flex-direction: column;
        align-items: flex-start;
        justify-content: flex-start;
        width: 92px;
        text-indent: 6px;
    }
    .paste .art {
        display: flex;
        align-items: center;
        gap: 10px;
        height: 66px;
        margin-bottom: 6px;
    }
    .clip-tools {
        display: flex;
        flex-direction: column;
        gap: 12px;
    }

    .group {
        display: flex;
        flex-direction: column;
        gap: 16px;
        padding-top: 10px;
        border-right: 2px solid #d5d5d5;
    }
    .font {
        padding-left: 20px;
        padding-right: 28px;
    }
    .paragraph {
        padding-left: 28px;
        padding-right: 30px;
    }
    .row {
        display: flex;
        align-items: center;
        height: 48px;
        gap: 20px;
    }
    .row button {
        gap: 13px;
    }
    .wide-gap {
        gap: 24px;
    }
    .styles-row {
        padding-left: 8px;
    }
    .sep {
        width: 2px;
        height: 36px;
        background: #d5d5d5;
    }
    .styles-row .sep {
        margin: 0 3px;
    }
    .paragraph .sep {
        margin: 0 5px;
    }
    .paragraph .align-row .sep {
        margin: 0 2px;
    }
    .pickers {
        display: flex;
        gap: 5px;
        margin-right: -12px;
    }
    .picker {
        display: flex;
        align-items: center;
        height: 46px;
        padding-right: 8px;
        background: #fff;
        border: 1px solid #bdbdbd;
        border-radius: 7px;
    }
    .picker select {
        appearance: none;
        flex: 1;
        min-width: 0;
        height: 100%;
        padding: 0 11px;
        border: 0;
        background: none;
        font: inherit;
        font-size: 24px;
        color: #000;
    }
    .font-name {
        width: 187px;
    }
    .font-size {
        width: 99px;
    }
    .case {
        width: 31px;
        font-size: 25px;
        font-weight: 300;
    }
    .glyph {
        width: 32px;
        justify-content: center;
        text-align: center;
        font-size: 26px;
    }
    .bold {
        font-weight: 700;
        color: #333;
    }
    .italic {
        font-family: "Liberation Serif", serif;
        font-style: italic;
        font-size: 30px;
    }
    .under {
        text-decoration: underline;
        text-decoration-thickness: 2px;
        text-underline-offset: 5px;
        font-weight: 300;
    }
    .strike {
        text-decoration: line-through;
        text-decoration-thickness: 2px;
        font-size: 24px;
        font-weight: 300;
    }
    .row .x-letter {
        height: 44px;
        gap: 1px;
    }
    sub,
    sup {
        font-size: 15px;
        font-weight: 500;
        line-height: 15px;
        color: #3b83d8;
    }
    sub {
        align-self: flex-end;
        margin-bottom: 2px;
    }
    sup {
        align-self: flex-start;
        margin-top: 2px;
    }
    .effects .chev {
        opacity: 0.4;
    }
    .num {
        fill: #3b83d8;
        stroke: none;
        font-size: 13px;
        font-weight: 500;
    }
    .pilcrow {
        width: 28px;
        justify-content: center;
        font-size: 32px;
        color: #333;
    }
    .aligns {
        display: flex;
        gap: 4px;
        margin: 0 -5px 0 -8px;
    }
    .aligns button {
        width: 48px;
        height: 48px;
        justify-content: center;
        border-radius: 7px;
    }
    .aligns .selected {
        background: #c4c4c4;
    }

    .gallery-group {
        display: flex;
        align-items: flex-start;
        padding: 2px 24px 0 20px;
        border-right: 2px solid #d5d5d5;
    }
    .gallery {
        display: flex;
        align-items: center;
        gap: 20px;
        height: 114px;
        padding-left: 44px;
        background: #fff;
        border: 1px solid #b9b9b9;
        border-radius: 8px;
    }
    .card {
        width: 140px;
        height: 92px;
        flex-direction: column;
        border: 1px solid #d6d6d6;
        border-radius: 6px;
        overflow: hidden;
    }
    .sample {
        width: 128px;
        height: 60px;
        line-height: 60px;
        overflow: hidden;
        white-space: nowrap;
        text-align: left;
        font-family: "Liberation Sans", Arial, sans-serif;
        font-size: 24px;
        color: #000;
    }
    .h1 {
        font-size: 32px;
        font-weight: 700;
    }
    .h2 {
        text-decoration: underline;
        text-decoration-thickness: 2px;
    }
    .h4 {
        font-size: 34px;
        font-weight: 700;
    }
    .card-label {
        width: 100%;
        height: 30px;
        line-height: 30px;
        font-size: 19px;
        background: #ededed;
        border-top: 1px solid #e0e0e0;
    }
    .more {
        width: 24px;
        padding-left: 4px;
    }
    .window .more svg {
        stroke-width: 3;
    }

    .large {
        flex-direction: column;
        justify-content: flex-start;
        padding: 6px 25px 0;
        border-right: 2px solid #d5d5d5;
        line-height: 24px;
    }
    .large svg {
        height: 66px;
        margin-bottom: 7px;
    }
    .large:last-child {
        border-right: 0;
    }
    .pane {
        padding: 4px 0 0 10px;
        border: 0;
    }
    .disabled {
        color: #8c8c8c;
    }

    .workspace {
        flex: 1;
        min-height: 0;
        display: flex;
        justify-content: center;
        overflow: hidden;
        background: #ebebeb;
    }
    .page {
        box-sizing: border-box;
        width: 1224px;
        padding: 9px 135px 0 167px;
        background: #fff;
        border-left: 2px solid #c8c8c8;
        border-right: 2px solid #c8c8c8;
        font-family: "Liberation Sans", Arial, sans-serif;
        color: #000;
    }
    .page-header {
        margin: 0 19px 0 20px;
        padding-bottom: 18px;
        border-bottom: 3px solid #808080;
        color: #8190af;
        font-weight: 700;
        line-height: 28px;
        text-align: right;
    }
    .page-header p {
        margin: 0 -9px 0 0;
    }
    ol {
        margin: 51px 0 0;
        padding-left: 29px;
        line-height: 22px;
    }
    li {
        padding-left: 10px;
    }
    .line {
        display: block;
        white-space: pre;
    }
    .gap {
        margin-bottom: 2px;
    }
    .grammar {
        text-decoration: underline double #2f5fd0 2px;
        text-underline-offset: 0;
        text-decoration-skip-ink: none;
    }
    .typo {
        text-decoration: underline wavy #e0342a 2px;
        text-underline-offset: 1px;
        text-decoration-skip-ink: none;
    }
    h2 {
        margin: 49px 0 26px 11px;
        font-size: 24px;
        line-height: 28px;
    }
    table {
        width: calc(100% + 4px);
        margin-left: -2px;
        border-collapse: collapse;
        font-size: 20px;
        line-height: 22px;
    }
    td {
        height: 22px;
        padding: 0 10px;
        border: 2px solid #000;
    }
    td:first-child {
        width: 241px;
    }

    .status {
        height: 43px;
        flex-shrink: 0;
        display: flex;
        align-items: center;
        padding-left: 48px;
        border-top: 2px solid #9b9b9b;
        background: linear-gradient(#dedede, #bfbfbf);
        color: #4a4a4a;
    }
    .status svg {
        stroke: #5a5a5a;
        stroke-width: 3;
    }
    .words {
        margin-left: 40px;
    }
    .proof {
        margin: 0 36px;
    }
    .proof svg {
        stroke-width: 2;
    }
    .status-right {
        margin-left: auto;
        display: flex;
        align-items: center;
        align-self: stretch;
    }
    .focus {
        gap: 14px;
        margin-right: 22px;
    }
    .focus svg {
        stroke-width: 2;
    }
    .view {
        width: 72px;
        height: 100%;
        justify-content: center;
    }
    .view svg {
        stroke-width: 2;
    }
    .current {
        background: #999;
    }
    .zoom {
        display: flex;
        align-items: center;
        gap: 12px;
        margin: 0 34px 0 14px;
    }
    .zoom input {
        appearance: none;
        width: 200px;
        height: 8px;
        margin: 0;
        border-radius: 4px;
        background: #8f8f8f;
    }
    .zoom input::-webkit-slider-thumb {
        appearance: none;
        width: 32px;
        height: 32px;
        border-radius: 50%;
        background: #fff;
        box-shadow: 0 1px 3px #0007;
    }
    .percent {
        margin-right: 48px;
    }

    .dock-area {
        flex-shrink: 0;
        height: 120px;
        padding-top: 3px;
        display: flex;
        justify-content: center;
        align-items: flex-start;
    }
    .dock {
        display: flex;
        align-items: center;
        gap: 22px;
        box-sizing: border-box;
        height: 110px;
        padding: 0 18px 6px 14px;
        border: 2px solid #ffffff30;
        border-radius: 30px;
        background: linear-gradient(90deg, #1f1532 0%, #221344 45%, #2f1157 60%, #49136b 71%, #431464 80%, #2d124c 91%, #241344 100%);
    }
    .app {
        position: relative;
    }
    .running::after {
        content: "";
        position: absolute;
        left: calc(50% - 4px);
        bottom: -19px;
        width: 8px;
        height: 8px;
        border-radius: 50%;
        background: #a596ba;
    }
    .installer.running::after {
        bottom: -11px;
    }
    .logo-letter {
        fill: #fff;
        stroke: none;
        font-size: 20px;
        font-weight: 700;
        text-anchor: middle;
    }
    .badge {
        position: absolute;
        top: -9px;
        right: -11px;
        width: 34px;
        height: 34px;
        line-height: 34px;
        border-radius: 50%;
        background: #e1523d;
        color: #fff;
        font-size: 20px;
        text-align: center;
    }
    .divider {
        width: 2px;
        height: 82px;
        margin: 0 12px;
        background: #ffffff4d;
    }
    .windows-app {
        margin: 0 -8px;
    }
    .minimized {
        display: flex;
        align-items: center;
        gap: 9px;
        margin: 0 -3px 0 -12px;
    }
    .strip {
        width: 83px;
        height: 14px;
        border-radius: 3px;
        background: linear-gradient(#4b4a55, #4b4a55) 12px 8px / 62px 1px no-repeat, linear-gradient(#999, #999) 4px 6px / 4px 5px no-repeat, linear-gradient(#d8c34a, #d8c34a) 6px 1px / 2px 3px no-repeat, #201e28;
    }
    .strip.busy {
        background: linear-gradient(#2c4a88, #2c4a88) 12px 8px / 62px 2px no-repeat, linear-gradient(#999, #999) 4px 6px / 4px 5px no-repeat, linear-gradient(#d8c34a, #d8c34a) 6px 1px / 2px 3px no-repeat, #201e28;
    }
    .mini-word {
        position: relative;
        width: 83px;
        height: 48px;
        justify-content: center;
        align-items: flex-end;
        background: linear-gradient(#f4f1f6 9px, #e8e8e8 9px);
    }
    .mini-page {
        width: 34px;
        height: 38px;
        background: repeating-linear-gradient(#bbb 0 1px, transparent 1px 3px) 4px 10px / 26px 28px no-repeat, #fff;
    }
    .mini-badge {
        position: absolute;
        right: 2px;
        bottom: -16px;
    }
</style>
